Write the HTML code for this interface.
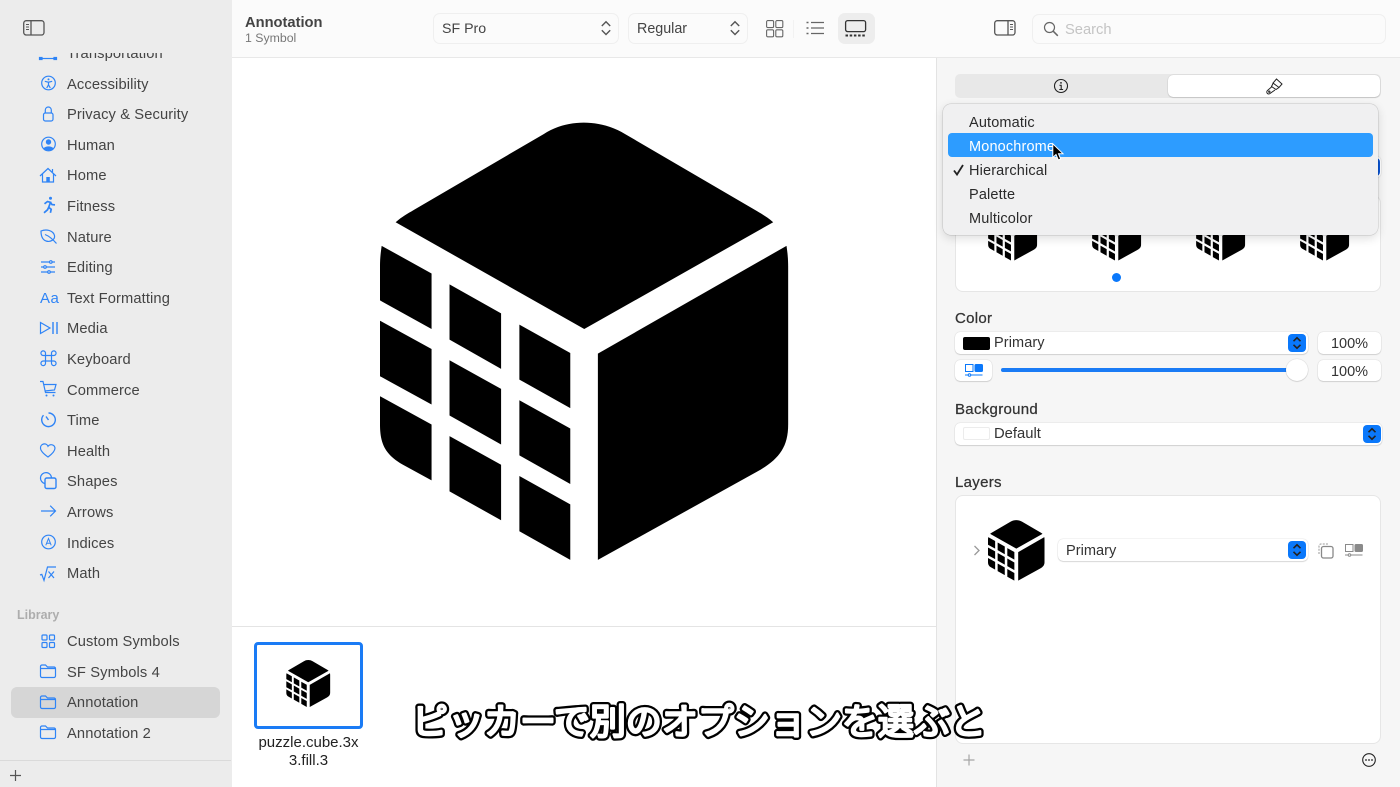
<!DOCTYPE html>
<html lang="ja"><head><meta charset="utf-8"><title>SF Symbols</title>
<style>
*{box-sizing:border-box}
html,body{margin:0;padding:0;width:1400px;height:787px;overflow:hidden;background:#fff}
body{font-family:"Liberation Sans","Noto Sans CJK JP",sans-serif;position:relative;color:#222;font-size:14.5px}
.a{position:absolute}
.t{position:absolute;white-space:nowrap;line-height:20px}
svg{position:absolute;overflow:visible}
.list{position:absolute;left:0;top:53px;width:231px;height:700px;overflow:hidden}
.r{position:absolute;left:0;width:231px;height:24px;line-height:26px;color:#444;font-size:14.7px;letter-spacing:.12px}
.r span{position:absolute;left:67px;top:0;white-space:nowrap}
.r svg{left:36px;top:-.5px;width:24px;height:24px;fill:none;stroke:#2f84f6;stroke-width:1.2}
.sel{position:absolute;background:#fff;border-radius:5px;box-shadow:0 0 1px rgba(0,0,0,.28),0 1px 1px rgba(0,0,0,.12)}
.blue{position:absolute;width:18px;height:18px;background:#0a78fb;border-radius:4px}
.blue svg{left:0;top:0;width:18px;height:18px;fill:none;stroke:#fff;stroke-width:1.6}
.tb{position:absolute;background:#fbfbfb;border:1px solid #efefef;border-radius:7px}
.m{position:absolute;left:969px;color:#2a2a2a;line-height:24px;font-size:14.5px;letter-spacing:.15px;white-space:nowrap}
.l{position:absolute;left:955px;color:#333;font-size:15px;letter-spacing:.3px;line-height:18px;-webkit-text-stroke:.25px #333}
</style></head>
<body>
<svg width="0" height="0" style="position:absolute"><defs>
<symbol id="cube" viewBox="28 37 1228 1315">
<path fill="#000" d="M75 337C95 320 110 312 130 300L520 72C590 26 690 26 765 72L1155 300C1175 312 1190 320 1210 337L642 658Z"/>
<path fill="#000" d="M683 732L1250 408C1254 435 1255 450 1255 480V945C1255 1015 1225 1050 1165 1085L683 1352Z"/>
<path fill="#000" d="M33 408L183 491V658L28 572V470C28 445 30 430 33 408ZM28 633L183 718V885L28 800ZM28 860L183 945V1113L95 1065C45 1035 28 1005 28 945Z"/>
<path fill="#000" d="M237 524L392 611V778L237 690ZM237 752L392 838V1005L237 918ZM237 980L392 1066V1233L237 1146Z"/>
<path fill="#000" d="M447 645L600 730V896L447 810ZM447 872L600 957V1124L447 1038ZM447 1100L600 1185V1352L447 1266Z"/>
</symbol>
<symbol id="updown" viewBox="0 0 18 18"><path fill="none" stroke="currentColor" stroke-width="1.600" d="M5.500 7.200L9 3.800l3.500 3.400M5.500 10.800L9 14.200l3.500-3.400"/></symbol>
<symbol id="updown2" viewBox="0 0 18 18"><path fill="none" stroke="currentColor" stroke-width="1.400" d="M4.800 7L9 2.800 13.200 7M4.800 11.300L9 15.500l4.200-4.200"/></symbol>
<symbol id="folder" viewBox="0 0 24 24"><path fill="none" stroke="#2f84f6" stroke-width="1.200" d="M4.500 9V7.500A1.500 1.500 0 0 1 6 6h3.500l2 2H18a1.500 1.500 0 0 1 1.500 1.500V17a1.500 1.500 0 0 1-1.500 1.500H6A1.500 1.500 0 0 1 4.500 17V9.500h15"/></symbol>
</defs></svg>

<!-- Sidebar -->
<div class="a" style="left:0;top:0;width:232px;height:787px;background:#ececec"></div>
<svg style="left:23px;top:20px" width="22" height="16" fill="none" stroke="#555" stroke-width="1.300"><rect x=".7" y=".7" width="20.300" height="14.300" rx="2.500"/><path d="M8 1v14"/><path d="M3 4.500h3M3 7h3M3 9.500h3" stroke-width="1"/></svg>

<div class="list">
<div class="r" style="top:-12px"><svg><path d="M4.500 17.500h15" /><rect x="3.500" y="16.500" width="2.500" height="2" fill="#2f84f6"/><rect x="18" y="16.500" width="2.500" height="2" fill="#2f84f6"/></svg><span>Transportation</span></div>
<div class="r" style="top:18.500px"><svg><circle cx="12.500" cy="12" r="6.800"/><circle cx="12.500" cy="8.400" r="1" fill="#2f84f6" stroke="none"/><path d="M8.800 10.300l3.700.9 3.700-.9M12.500 11.200v2.600l-1.800 3.200M12.500 13.800l1.800 3.200"/></svg><span>Accessibility</span></div>
<div class="r" style="top:49px"><svg><rect x="7.500" y="11" width="9.500" height="8" rx="1.800"/><path d="M9.300 11V8a3 3 0 0 1 6 0v3"/></svg><span>Privacy &amp; Security</span></div>
<div class="r" style="top:79.500px"><svg><circle cx="12.500" cy="12" r="6.800"/><circle cx="12.500" cy="10" r="2.700" fill="#2f84f6" stroke="none"/><path d="M7.500 16.300c2-2.600 8-2.600 10 0a6.800 6.800 0 0 1-10 0z" fill="#2f84f6" stroke="none"/></svg><span>Human</span></div>
<div class="r" style="top:110px"><svg><path d="M4 13L12 5.500l8 7.500M6.500 11v8h11v-8M16.500 6v3"/><rect x="10.300" y="14" width="3.500" height="5" fill="#2f84f6" stroke="none"/></svg><span>Home</span></div>
<div class="r" style="top:140.500px"><svg style="stroke-width:1.700"><circle cx="14.500" cy="5.300" r="1.500" fill="#2f84f6" stroke="none"/><path d="M8.500 10.800l3-2.300 3 .8-1.800 5 2.500 2-.8 3.500M12.700 14.300l-1.200 2.500-3.500 3M14.500 9.300l1.500 2.300 3 .3"/></svg><span>Fitness</span></div>
<div class="r" style="top:171.500px"><svg><path d="M5 7C10 5 17 6 18.500 11.500C19.300 15.500 14.500 18.500 10 17C6 15.500 5 11 5 7zM9 10.500c4 1.500 8 5 11.500 9"/></svg><span>Nature</span></div>
<div class="r" style="top:202px"><svg><path d="M5 7h14M5 12h14M5 17h14"/><circle cx="14.800" cy="7" r="1.300" fill="#ececec"/><circle cx="9" cy="12" r="1.300" fill="#ececec"/><circle cx="13" cy="17" r="1.300" fill="#ececec"/></svg><span>Editing</span></div>
<div class="r" style="top:232.500px"><b style="position:absolute;left:40px;line-height:25px;font-weight:normal;color:#2f84f6;font-size:15px;letter-spacing:.5px">Aa</b><span>Text Formatting</span></div>
<div class="r" style="top:263px"><svg><path d="M4.500 6.500L14 12l-9.500 5.500z"/><path d="M17 6v12M21 6v12" stroke-width="1.400"/></svg><span>Media</span></div>
<div class="r" style="top:293.500px"><svg><path d="M9.500 9.500h6v5.500h-6zM9.500 9.500V7.500a2.300 2.300 0 1 0-2.300 2h2.300M15.500 9.500V7.500a2.300 2.300 0 1 1 2.300 2h-2.300M9.500 15v2a2.300 2.300 0 1 1-2.300-2h2.300M15.500 15v2a2.300 2.300 0 1 0 2.300-2h-2.300"/></svg><span>Keyboard</span></div>
<div class="r" style="top:324.500px"><svg><path d="M4 4.500h3l2.500 11h10M7.500 7.500h12.500l-1.500 5.500-10 1"/><circle cx="10.500" cy="18.500" r="1" fill="#2f84f6" stroke="none"/><circle cx="17.500" cy="18.500" r="1" fill="#2f84f6" stroke="none"/></svg><span>Commerce</span></div>
<div class="r" style="top:355px"><svg style="stroke-width:1.400"><path d="M12.500 5a6.800 6.800 0 1 1-5 2.200M12.500 12L10 8.500" /></svg><span>Time</span></div>
<div class="r" style="top:385.500px"><svg><path d="M12 19C7 15.500 4.500 12.800 4.500 10A3.900 3.900 0 0 1 12 8.300 3.900 3.900 0 0 1 19 10c0 2.800-2.200 5.500-7 9z"/></svg><span>Health</span></div>
<div class="r" style="top:416px"><svg><rect x="9" y="9" width="11" height="10.500" rx="1.800" stroke-width="1.400"/><path d="M9 14.500A5.500 5.500 0 1 1 15.500 9"/></svg><span>Shapes</span></div>
<div class="r" style="top:446.500px"><svg><path d="M5 12h14.500M14.200 6.700l5.300 5.300-5.300 5.300"/></svg><span>Arrows</span></div>
<div class="r" style="top:477.500px"><svg><circle cx="12.500" cy="12" r="6.800"/><path d="M9.800 15.300l2.700-6.800 2.700 6.800M10.700 13.200h3.600" stroke-width="1"/></svg><span>Indices</span></div>
<div class="r" style="top:508px"><svg><path d="M4 14l1.800-.6 2.200 6L11.500 6h8.500M12.500 10.500l5.500 6.500M18 10.500l-5.500 6.500"/></svg><span>Math</span></div>
</div>

<div class="t" style="left:17px;top:605px;font-size:12.500px;color:#adadad;font-weight:bold">Library</div>
<div class="a" style="left:11px;top:687px;width:209px;height:31px;background:#d6d6d6;border-radius:6px"></div>
<div class="r" style="top:629px"><svg><rect x="6" y="6" width="5" height="5" rx="1"/><rect x="13.500" y="6" width="5" height="5" rx="1"/><rect x="6" y="13.500" width="5" height="5" rx="1"/><rect x="13.500" y="13.500" width="5" height="5" rx="1"/></svg><span>Custom Symbols</span></div>
<div class="r" style="top:659.500px"><svg><use href="#folder" width="24" height="24"/></svg><span>SF Symbols 4</span></div>
<div class="r" style="top:690px"><svg><use href="#folder" width="24" height="24"/></svg><span>Annotation</span></div>
<div class="r" style="top:720.500px"><svg><use href="#folder" width="24" height="24"/></svg><span>Annotation 2</span></div>
<div class="a" style="left:0;top:760px;width:231px;height:1px;background:#dadada"></div>
<svg style="left:9px;top:769px" width="13" height="13" stroke="#555" stroke-width="1.200"><path d="M6.500 1v11M1 6.500h11"/></svg>

<!-- Toolbar -->
<div class="a" style="left:232px;top:0;width:1168px;height:58px;background:#fbfbfb;border-bottom:1px solid #e8e8e8"></div>
<div class="t" style="left:245px;top:13px;font-weight:bold;color:#444;font-size:14.700px">Annotation</div>
<div class="t" style="left:245px;top:28px;color:#777;font-size:12.300px">1 Symbol</div>
<div class="tb" style="left:433px;top:13px;width:186px;height:31px"></div>
<div class="t" style="left:442px;top:19px;color:#444;font-size:14.200px">SF Pro</div>
<svg style="left:597px;top:19px;color:#555" width="18" height="18"><use href="#updown2" width="18" height="18"/></svg>
<div class="tb" style="left:628px;top:13px;width:120px;height:31px"></div>
<div class="t" style="left:637px;top:19px;color:#444;font-size:14.300px">Regular</div>
<svg style="left:726px;top:19px;color:#555" width="18" height="18"><use href="#updown2" width="18" height="18"/></svg>
<svg style="left:766px;top:20px" width="18" height="18" fill="none" stroke="#666" stroke-width="1.100"><rect x=".6" y=".6" width="7" height="7" rx="1.200"/><rect x="9.800" y=".6" width="7" height="7" rx="1.200"/><rect x=".6" y="9.800" width="7" height="7" rx="1.200"/><rect x="9.800" y="9.800" width="7" height="7" rx="1.200"/></svg>
<div class="a" style="left:793px;top:20px;width:1px;height:18px;background:#f2f2f2"></div>
<svg style="left:806px;top:21px" width="19" height="15" fill="none" stroke="#666" stroke-width="1.200"><path d="M5 1.500h13M5 7h13M5 12.500h13"/><path d="M.5 1.500h2M.5 7h2M.5 12.500h2" stroke-width="1.500"/></svg>
<div class="a" style="left:838px;top:13px;width:37px;height:31px;background:#ededed;border-radius:7px"></div>
<svg style="left:845px;top:20px" width="22" height="17" fill="none" stroke="#333" stroke-width="1.300"><rect x=".6" y=".6" width="20" height="11" rx="2"/><path d="M.5 15.500h21" stroke-dasharray="2.500 1.700" stroke-width="2"/></svg>
<svg style="left:994px;top:20px" width="22" height="16" fill="none" stroke="#555" stroke-width="1.300"><rect x=".7" y=".7" width="20.300" height="14.300" rx="2.500"/><path d="M14 1v14"/><path d="M16 4.500h3M16 7h3M16 9.500h3" stroke-width="1"/></svg>
<div class="tb" style="left:1032px;top:14px;width:354px;height:30px"></div>
<svg style="left:1043px;top:21px" width="16" height="16" fill="none" stroke="#666" stroke-width="1.200"><circle cx="6.500" cy="6.500" r="5"/><path d="M10.200 10.200l4.600 4.600" stroke-width="1.500"/></svg>
<div class="t" style="left:1065px;top:20px;color:#c4c4c4;font-size:14.700px">Search</div>

<!-- Main -->
<svg style="left:380px;top:122.300px" width="408.500" height="438.300"><use href="#cube" width="408.500" height="438.300"/></svg>
<div class="a" style="left:232px;top:626px;width:704px;height:1px;background:#e4e4e4"></div>
<div class="a" style="left:254px;top:642px;width:109px;height:87px;border:3.500px solid #1a7bf5;border-radius:4px;background:#fff"></div>
<svg style="left:286px;top:660px" width="44.500" height="47"><use href="#cube" width="44.500" height="47"/></svg>
<div class="t" style="left:232px;width:153px;top:734px;text-align:center;color:#222;font-size:15px;line-height:17.500px;white-space:normal">puzzle.cube.3x<br>3.fill.3</div>

<!-- Inspector -->
<div class="a" style="left:936px;top:58px;width:464px;height:729px;background:#f6f6f6;border-left:1px solid #e3e3e3"></div>
<div class="a" style="left:955px;top:74px;width:426px;height:24px;background:#e8e8e8;border-radius:5px"></div>
<div class="sel" style="left:1168px;top:75px;width:212px;height:22px"></div>
<svg style="left:1053px;top:78px" width="16" height="16" fill="none" stroke="#222" stroke-width="1.100"><circle cx="8" cy="8" r="6.500"/><circle cx="8" cy="4.900" r=".9" fill="#222" stroke="none"/><path d="M6.500 7.300H8.200V11.500M6.300 11.500h3.800"/></svg>
<svg style="left:1266px;top:78px" width="17" height="17" fill="none" stroke="#222" stroke-width="1"><path d="M10.500 1L16 6l-3 3.500-6-4.500zM7 5.500L5.500 8.500 10 11.500l3-2"/><path d="M6 8.500L1.500 12.500a1.500 1.500 0 0 0 2.500 3l5-3.500"/><circle cx="3.300" cy="13.700" r=".7"/></svg>

<!-- behind menu -->
<div class="a" style="left:1360px;top:156px;width:21px;height:22px;background:#fff;border-radius:5px;box-shadow:0 0 1px rgba(0,0,0,.3)"></div>
<div class="a" style="left:1372px;top:158px;width:8px;height:18px;background:#0a56d8;border-radius:4px"></div>
<div class="a" style="left:955px;top:195px;width:426px;height:97px;background:#fff;border:1px solid #e6e6e6;border-radius:8px"></div>
<svg style="left:987.700px;top:207.500px" width="49.300" height="52.500"><use href="#cube" width="49.300" height="52.500"/></svg>
<svg style="left:1092px;top:207.500px" width="49.300" height="52.500"><use href="#cube" width="49.300" height="52.500"/></svg>
<svg style="left:1196px;top:207.500px" width="49.300" height="52.500"><use href="#cube" width="49.300" height="52.500"/></svg>
<svg style="left:1300.300px;top:207.500px" width="49.300" height="52.500"><use href="#cube" width="49.300" height="52.500"/></svg>
<div class="a" style="left:1112px;top:273px;width:9px;height:9px;border-radius:50%;background:#0a78fb"></div>

<!-- Menu -->
<div class="a" style="left:943px;top:104px;width:435px;height:131px;background:#f0f0f1;border-radius:8px;box-shadow:0 0 0 .5px rgba(0,0,0,.16),0 3px 10px rgba(0,0,0,.14)"></div>
<div class="a" style="left:948px;top:133px;width:425px;height:24px;background:#2d9cff;border-radius:4px"></div>
<div class="m" style="top:111px">Automatic</div>
<div class="m" style="top:135px;color:#fff">Monochrome</div>
<div class="m" style="top:159px">Hierarchical</div>
<div class="m" style="top:183px">Palette</div>
<div class="m" style="top:207px">Multicolor</div>
<svg style="left:953px;top:164px" width="12" height="12" fill="none" stroke="#222" stroke-width="1.800"><path d="M1 6.500L4 10.500 10 1"/></svg>
<svg style="left:1052px;top:143px" width="13" height="19"><path d="M.8.800V14.500L4 11.500 6.300 17l2.400-1L6.500 10.700H11z" fill="#000" stroke="#fff" stroke-width="1"/></svg>

<!-- Color -->
<div class="l" style="top:310px">Color</div>
<div class="sel" style="left:955px;top:332px;width:353px;height:22px"></div>
<div class="a" style="left:963px;top:337px;width:27px;height:13px;background:#000;border-radius:2px"></div>
<div class="t" style="left:994px;top:333px;color:#333;font-size:14.500px;letter-spacing:.1px">Primary</div>
<div class="blue" style="left:1288px;top:334px"><svg><use href="#updown" width="18" height="18"/></svg></div>
<div class="sel" style="left:1318px;top:332px;width:63px;height:22px"></div>
<div class="t" style="left:1318px;width:63px;top:334px;text-align:center;color:#333;font-size:14.500px">100%</div>
<div class="sel" style="left:955px;top:360px;width:37px;height:21px"></div>
<svg style="left:965px;top:364px" width="18" height="13" fill="none" stroke="#0a78fb" stroke-width="1"><rect x=".5" y=".5" width="7.500" height="7"/><rect x="10" y=".5" width="7.500" height="7" rx="1" fill="#0a78fb"/><path d="M0 11h17.500"/><circle cx="4.500" cy="11" r="1.300" fill="#fff"/></svg>
<div class="a" style="left:1001px;top:368px;width:290px;height:4px;background:#1a7bf5;border-radius:2px"></div>
<div class="a" style="left:1286px;top:359px;width:22px;height:22px;border-radius:50%;background:#fff;box-shadow:0 0 1px rgba(0,0,0,.3),0 1px 1px rgba(0,0,0,.1)"></div>
<div class="sel" style="left:1318px;top:360px;width:63px;height:21px"></div>
<div class="t" style="left:1318px;width:63px;top:362px;text-align:center;color:#333;font-size:14.500px">100%</div>

<!-- Background -->
<div class="l" style="top:401px">Background</div>
<div class="sel" style="left:955px;top:423px;width:427px;height:22px"></div>
<div class="a" style="left:963px;top:427px;width:27px;height:13px;background:#fff;border:1px solid #ececec;border-radius:2px"></div>
<div class="t" style="left:994px;top:424px;color:#333;font-size:14.800px">Default</div>
<div class="blue" style="left:1363px;top:425px"><svg><use href="#updown" width="18" height="18"/></svg></div>

<!-- Layers -->
<div class="l" style="top:474px">Layers</div>
<div class="a" style="left:955px;top:495px;width:426px;height:249px;background:#fff;border:1px solid #e6e6e6;border-radius:8px"></div>
<svg style="left:973px;top:545px" width="8" height="11" fill="none" stroke="#999" stroke-width="1.300"><path d="M1.500 1l4.500 4.500L1.500 10"/></svg>
<svg style="left:987.700px;top:520px" width="56.600" height="60.700"><use href="#cube" width="56.600" height="60.700"/></svg>
<div class="sel" style="left:1058px;top:539px;width:250px;height:22px"></div>
<div class="t" style="left:1066px;top:541px;color:#333;font-size:14.600px">Primary</div>
<div class="blue" style="left:1288px;top:541px"><svg><use href="#updown" width="18" height="18"/></svg></div>
<svg style="left:1318px;top:543px" width="16" height="16" fill="none" stroke="#999" stroke-width="1"><rect x="3.500" y="3.500" width="11.500" height="11.500" rx="2" stroke="#888" stroke-width="1.300"/><path d="M1 11V3a2 2 0 0 1 2-2h8" stroke-dasharray="2 1.200"/></svg>
<svg style="left:1345px;top:544px" width="18" height="13" fill="none" stroke="#8a8a8a" stroke-width="1"><rect x=".5" y=".5" width="7.500" height="7"/><rect x="10" y=".5" width="7.500" height="7" rx="1" fill="#8a8a8a"/><path d="M0 11h17.500"/><circle cx="4.500" cy="11" r="1.300" fill="#fff"/></svg>
<svg style="left:963px;top:754px" width="12" height="12" stroke="#a5a5a5" stroke-width="1.200"><path d="M6 .5v11M.5 6h11"/></svg>
<svg style="left:1362px;top:753px" width="14" height="14" fill="none" stroke="#222" stroke-width="1.100"><circle cx="7" cy="7" r="6.300"/><circle cx="4" cy="7" r=".9" fill="#222" stroke="none"/><circle cx="7" cy="7" r=".9" fill="#222" stroke="none"/><circle cx="10" cy="7" r=".9" fill="#222" stroke="none"/></svg>

<!-- Caption -->
<svg style="left:0;top:0" width="1400" height="787" font-family="'WenQuanYi Zen Hei','Noto Sans CJK JP',sans-serif" font-size="36">
<text x="412" y="734" fill="#000" stroke="#000" stroke-width="7" stroke-linejoin="round" stroke-linecap="round">ピッカーで別のオプションを選ぶと</text>
<text x="412" y="734" fill="#fff" stroke="#fff" stroke-width="2.400" stroke-linejoin="round" stroke-linecap="round">ピッカーで別のオプションを選ぶと</text>
</svg>
</body></html>
